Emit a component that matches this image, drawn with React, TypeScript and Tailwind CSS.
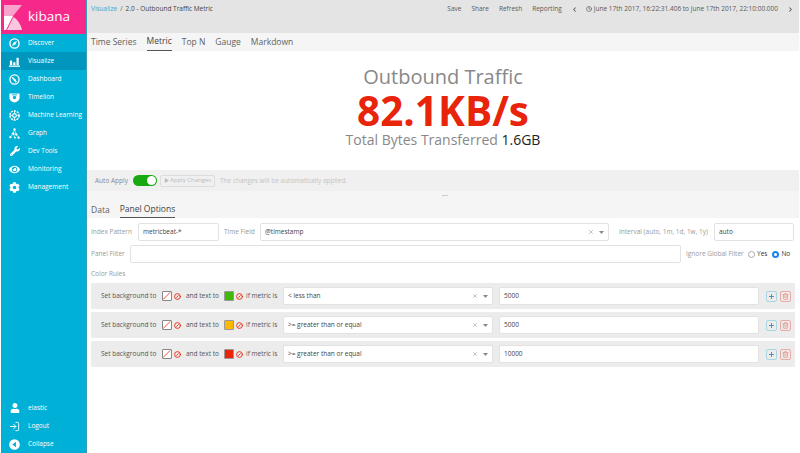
import type { ReactNode } from "react";
import { ChevronLeft, ChevronRight, Clock, LogIn, X, Plus, Trash2, CircleSlash, Play } from "lucide-react";
import { FaCog, FaEye, FaUser, FaWrench } from "react-icons/fa";

type NavItem = { label: string; icon: ReactNode; active?: boolean };

const CompassIcon = (
  <svg width="11" height="11" viewBox="0 0 12 12" fill="none">
    <circle cx="6" cy="6" r="5" stroke="white" strokeWidth="1.5" />
    <path d="M8.8 3.2 L7 7 L3.2 8.8 L5 5 Z" fill="white" />
  </svg>
);

const BarsIcon = (
  <svg width="11" height="11" viewBox="0 0 12 12" fill="white">
    <rect x="0" y="10.4" width="12" height="1.4" />
    <rect x="1" y="5" width="2.4" height="5" />
    <rect x="4.6" y="6.8" width="2.4" height="3.2" />
    <rect x="8.2" y="2" width="2.4" height="8" />
  </svg>
);

const GaugeIcon = (
  <svg width="11" height="11" viewBox="0 0 12 12" fill="none">
    <circle cx="6" cy="6" r="5" stroke="white" strokeWidth="1.4" />
    <path d="M3.4 3.6 L6.4 6.8 L8 9" stroke="white" strokeWidth="1.5" />
    <circle cx="6" cy="6.4" r="1.2" fill="white" />
  </svg>
);

const TimelionIcon = (
  <svg width="11" height="11" viewBox="0 0 12 12">
    <path d="M0.5 1.5 H11.5 V6.5 C11.5 9 8.5 11 6 11.5 C3.5 11 0.5 9 0.5 6.5 Z" fill="white" />
    <circle cx="6" cy="6" r="1.8" fill="#00b0d6" />
    <rect x="3" y="2.6" width="6" height="1" fill="#00b0d6" />
  </svg>
);

const LearningIcon = (
  <svg width="11" height="11" viewBox="0 0 12 12" fill="none">
    <circle cx="6" cy="6" r="5" stroke="white" strokeWidth="1.6" strokeDasharray="2.2 1" />
    <circle cx="6" cy="6" r="2" stroke="white" strokeWidth="1.2" />
    <path d="M6 1 V4 M6 8 V11 M1 6 H4 M8 6 H11" stroke="white" strokeWidth="0.8" />
  </svg>
);

const GraphIcon = (
  <svg width="11" height="11" viewBox="0 0 12 12" fill="white" stroke="white" strokeWidth="0.6">
    <path d="M6 1.5 L4.5 6 L1.5 10 M4.5 6 L8 7 L10.5 10.5 M8 7 L6 1.5 M4.5 6 L6.5 10.5" fill="none" />
    <circle cx="6" cy="1.5" r="1" />
    <circle cx="4.5" cy="6" r="1" />
    <circle cx="8" cy="7" r="1" />
    <circle cx="1.5" cy="10" r="1" />
    <circle cx="10.5" cy="10.5" r="1" />
    <circle cx="6.5" cy="10.5" r="0.8" />
  </svg>
);

const CollapseIcon = (
  <svg width="11" height="11" viewBox="0 0 12 12">
    <circle cx="6" cy="6" r="5.8" fill="white" />
    <path d="M7.6 3 V9 L3.6 6 Z" fill="#00b0d6" />
  </svg>
);

const navItems: NavItem[] = [
  { label: "Discover", icon: CompassIcon },
  { label: "Visualize", icon: BarsIcon, active: true },
  { label: "Dashboard", icon: GaugeIcon },
  { label: "Timelion", icon: TimelionIcon },
  { label: "Machine Learning", icon: LearningIcon },
  { label: "Graph", icon: GraphIcon },
  { label: "Dev Tools", icon: <FaWrench size={10} /> },
  { label: "Monitoring", icon: <FaEye size={11} /> },
  { label: "Management", icon: <FaCog size={11} /> },
];

const rules = [
  { color: "bg-[#41b80c]", op: "< less than", value: "5000" },
  { color: "bg-[#fdb900]", op: ">= greater than or equal", value: "5000" },
  { color: "bg-[#e8240a]", op: ">= greater than or equal", value: "10000" },
];

function SideLink({ item }: { item: NavItem }) {
  return (
    <div className={`flex h-[18px] items-center text-[6.5px] text-white ${item.active ? "bg-[#0096bd]" : ""}`}>
      <span className="ml-[8px] flex w-[11px] shrink-0 justify-center">{item.icon}</span>
      <span className="ml-[8px]">{item.label}</span>
    </div>
  );
}

function Swatch({ className }: { className: string }) {
  return (
    <span className="flex items-center gap-[2px]">
      <span className={`h-[10px] w-[10px] rounded-[1px] border border-[#999] ${className}`} />
      <CircleSlash size={7} strokeWidth={3} className="text-[#e8240a]" />
    </span>
  );
}

function EmptySwatch() {
  return (
    <span className="flex items-center gap-[2px]">
      <svg width="10" height="10" viewBox="0 0 10 10" className="rounded-[1px] border border-[#888] bg-white">
        <path d="M0 9.5 L9 0.5" stroke="#e8240a" strokeWidth="1" />
      </svg>
      <CircleSlash size={7} strokeWidth={3} className="text-[#e8240a]" />
    </span>
  );
}

function Field({ children, className }: { children?: ReactNode; className: string }) {
  return (
    <div className={`flex h-[18px] shrink-0 items-center rounded-[2px] border border-[#e2e2e2] bg-white px-[4px] text-[6.5px] text-[#444] ${className}`}>
      {children}
    </div>
  );
}

function SelectArrows() {
  return (
    <span className="ml-auto flex items-center gap-[5px] text-[#888]">
      <X size={6} strokeWidth={2} />
      <svg width="5" height="3" viewBox="0 0 5 3" fill="currentColor">
        <path d="M0 0 H5 L2.5 3 Z" />
      </svg>
    </span>
  );
}

function RuleRow({ color, op, value }: { color: string; op: string; value: string }) {
  return (
    <div className="flex h-[26px] items-center bg-[#ececec] pl-[10px] text-[6.5px] text-[#555]">
      <span className="w-[57px] shrink-0">Set background to</span>
      <span className="ml-[4px]"><EmptySwatch /></span>
      <span className="ml-[5px] w-[34px] shrink-0">and text to</span>
      <span className="ml-[4px]"><Swatch className={color} /></span>
      <span className="ml-[3px] w-[33px] shrink-0">if metric is</span>
      <Field className="ml-[4px] w-[210px]">
        {op}
        <SelectArrows />
      </Field>
      <Field className="ml-[6px] w-[260px]">{value}</Field>
      <span className="ml-[7px] flex h-[11px] w-[11px] shrink-0 items-center justify-center rounded-[2px] border border-[#a9d6e3] text-[#3a87ad]">
        <Plus size={7} strokeWidth={3} />
      </span>
      <span className="ml-[3px] flex h-[11px] w-[11px] shrink-0 items-center justify-center rounded-[2px] border border-[#eaa9a2] text-[#e5968d]">
        <Trash2 size={7} strokeWidth={2.5} />
      </span>
    </div>
  );
}

export default function App() {
  return (
    <div className="flex h-[453px] w-[800px] overflow-hidden bg-white font-['Open_Sans',sans-serif]">
      <aside className="ml-px flex w-[86px] shrink-0 flex-col border-r border-[#3a9db5] bg-[#00b0d6]">
        <div className="flex h-[34px] items-center bg-[#f6298a] pl-[3px]">
          <svg width="18" height="25" viewBox="0 0 18 25" className="shrink-0">
            <path d="M0 0 H18 L9 11 H0 Z" fill="#f8a3cb" />
            <path d="M0 11 H9 L2 25 H0 Z" fill="white" />
            <path d="M3 25 L9.5 12 C14 15 17 20 18 25 Z" fill="#fbc6df" />
          </svg>
          <span className="ml-[6px] text-[13.5px] leading-none text-white">kibana</span>
        </div>
        {navItems.map((item) => (
          <SideLink key={item.label} item={item} />
        ))}
        <div className="mt-auto">
          <SideLink item={{ label: "elastic", icon: <FaUser size={10} /> }} />
          <SideLink item={{ label: "Logout", icon: <LogIn size={11} strokeWidth={2} /> }} />
          <SideLink item={{ label: "Collapse", icon: CollapseIcon }} />
        </div>
      </aside>

      <main className="flex min-w-0 flex-1 flex-col pr-px">
        <header className="h-[33px] bg-[#e4e4e4] pl-[4px] pr-[5px] pt-[1px] text-[6.5px] text-[#5a5a5a]">
          <div className="flex h-[16px] items-center">
            <span className="text-[#45a8c6]">Visualize</span>
            <span className="ml-[3px]">/</span>
            <span className="ml-[3px] text-[#444]">2.0 - Outbound Traffic Metric</span>
            <div className="ml-auto flex items-center">
              <span>Save</span>
              <span className="ml-[10px]">Share</span>
              <span className="ml-[10px]">Refresh</span>
              <span className="ml-[10px]">Reporting</span>
              <ChevronLeft size={7} strokeWidth={3.5} className="ml-[9px]" />
              <Clock size={6} strokeWidth={2.5} className="ml-[8px]" />
              <span className="ml-[2px]">June 17th 2017, 16:22:31.406 to June 17th 2017, 22:10:00.000</span>
              <ChevronRight size={7} strokeWidth={3.5} className="ml-[9px]" />
            </div>
          </div>
        </header>

        <nav className="flex h-[18px] items-center gap-[10px] bg-[#f5f5f5] pl-[4px] text-[8.5px] text-[#5f5f5f]">
          <span>Time Series</span>
          <span className="flex h-full items-center border-b border-[#555] text-[#444]">Metric</span>
          <span>Top N</span>
          <span>Gauge</span>
          <span>Markdown</span>
        </nav>

        <section className="flex h-[119px] flex-col items-center pt-[14px]">
          <div className="text-[20px] leading-[24px] text-[#888]">Outbound Traffic</div>
          <div className="text-[40.5px] font-bold leading-[44px] text-[#e8240a]">82.1KB/s</div>
          <div className="-mt-[3px] text-[14px] leading-[20px] text-[#888]">
            Total Bytes Transferred <span className="text-[#222]">1.6GB</span>
          </div>
        </section>

        <div className="flex h-[21px] items-center gap-[3px] bg-[#f0f0f0] pl-[8px] text-[6.5px] text-[#888]">
          <span>Auto Apply</span>
          <span className="ml-[2px] flex h-[11px] w-[24px] items-center justify-end rounded-full bg-[#18a80f] pr-[1px]">
            <span className="h-[9px] w-[9px] rounded-full bg-white" />
          </span>
          <span className="flex h-[12px] w-[55px] items-center whitespace-nowrap rounded-[2px] border border-[#ddd] pl-[3px] text-[6px] text-[#bbb]">
            <Play size={5} fill="currentColor" className="mr-px" />
            Apply Changes
          </span>
          <span className="ml-[2px] text-[#c4c4c4]">The changes will be automatically applied.</span>
        </div>

        <div className="flex h-[27px] flex-col bg-[#f5f5f5] pl-[4px] text-[8.5px] text-[#5f5f5f]">
          <div className="mx-auto mt-[4px] h-px w-[6px] bg-[#ccc]" />
          <div className="mt-auto flex items-end gap-[10px]">
            <span className="pb-[1px]">Data</span>
            <span className="border-b border-[#555] pb-[1px] text-[#444]">Panel Options</span>
          </div>
        </div>

        <div className="flex flex-col pl-[4px] pr-[4px] pt-[5px] text-[6.5px] text-[#999]">
          <div className="flex items-center">
            <span className="w-[47px] shrink-0">Index Pattern</span>
            <Field className="w-[81px]">metricbeat-*</Field>
            <span className="ml-[5px] w-[32px] shrink-0">Time Field</span>
            <Field className="ml-[4px] w-[349px]">
              @timestamp
              <SelectArrows />
            </Field>
            <span className="ml-[10px] w-[91px] shrink-0">Interval (auto, 1m, 1d, 1w, 1y)</span>
            <Field className="ml-[4px] w-[80px]">auto</Field>
          </div>
          <div className="mt-[4px] flex items-center">
            <span className="w-[39px] shrink-0">Panel Filter</span>
            <Field className="w-[551px]" />
            <span className="ml-[5px] w-[62px] shrink-0">Ignore Global Filter</span>
            <span className="h-[7px] w-[7px] shrink-0 rounded-full border border-[#aaa] bg-white" />
            <span className="ml-[2px] text-[#333]">Yes</span>
            <span className="ml-[5px] flex h-[7px] w-[7px] shrink-0 items-center justify-center rounded-full bg-[#1a87e8]">
              <span className="h-[3px] w-[3px] rounded-full bg-white" />
            </span>
            <span className="ml-[2px] text-[#333]">No</span>
          </div>
          <div className="mt-[6px] h-[10px] leading-[10px]">Color Rules</div>
          <div className="mt-[4px] flex flex-col gap-[3px]">
            {rules.map((r) => (
              <RuleRow key={r.color} {...r} />
            ))}
          </div>
        </div>
      </main>
    </div>
  );
}
